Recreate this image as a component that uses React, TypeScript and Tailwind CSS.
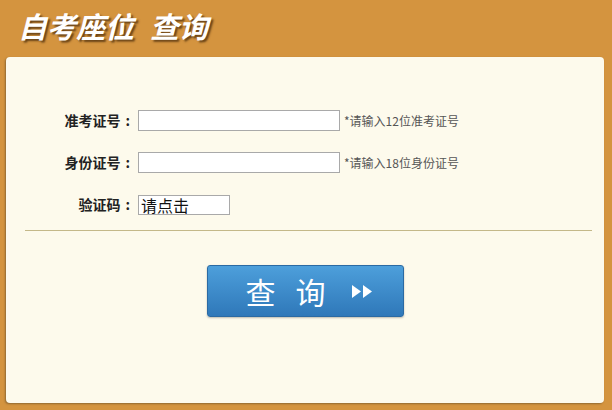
export default function App() {
    const cjk = { fontFamily: '"Noto Sans CJK SC", "Noto Sans", sans-serif' };

    const rows = [
        { label: '准考证号', hint: '*请输入12位准考证号' },
        { label: '身份证号', hint: '*请输入18位身份证号' },
    ];

    return (
        <div className="flex h-[410px] w-[612px] flex-col bg-[#d4943f]" style={cjk}>
            <div className="flex h-[57px] items-start pl-[18px] pt-[6px]">
                <h1 className="text-[29px] font-bold italic leading-[38px] text-white [text-shadow:2px_2px_2px_rgba(70,40,10,0.75)]">
                    自考座位<span className="ml-[16px]">查询</span>
                </h1>
            </div>

            <div className="ml-[6px] mr-[8px] h-[346px] rounded-[4px] bg-[#fdfaec] shadow-[-1px_1px_2px_rgba(90,70,40,0.55)]">
                <div className="flex flex-col gap-[21px] pt-[53px]">
                    {rows.map((row) => (
                        <div key={row.label} className="flex items-center">
                            <label className="flex w-[127px] justify-end text-[14px] font-bold text-[#222]">
                                {row.label}
                                <span className="ml-[5px] mr-[3px]">:</span>
                            </label>
                            <input className="ml-[5px] h-[21px] w-[202px] border border-[#a9a9a9] bg-white" />
                            <span className="ml-[4px] text-[12px] text-[#555]">{row.hint}</span>
                        </div>
                    ))}
                    <div className="flex items-center">
                        <label className="flex w-[127px] justify-end text-[14px] font-bold text-[#222]">
                            验证码
                            <span className="ml-[5px] mr-[3px]">:</span>
                        </label>
                        <div className="ml-[5px] flex h-[20px] w-[92px] items-center border border-[#a9a9a9] bg-white pl-[2px] text-[16px] leading-none text-[#111]">
                            请点击
                        </div>
                    </div>
                </div>

                <div className="ml-[19px] mr-[12px] mt-[15px] border-t border-[#c4b889]" />

                <div className="mt-[34px] flex justify-center">
                    <button className="flex h-[52px] w-[197px] items-center justify-center rounded-[3px] border border-[#2b6aa3] bg-gradient-to-b from-[#4d9fdb] to-[#2f78b9] pl-[8px] text-white shadow-[0_1px_2px_rgba(0,0,0,0.25)]">
                        <span className="text-[30px] leading-none">查</span>
                        <span className="ml-[20px] text-[30px] leading-none">询</span>
                        <svg width="21" height="13" viewBox="0 0 21 13" className="ml-[26px]">
                            <polygon points="0,0 9,6.5 0,13" fill="white" />
                            <polygon points="11,0 20,6.5 11,13" fill="white" />
                        </svg>
                    </button>
                </div>
            </div>
        </div>
    );
}
